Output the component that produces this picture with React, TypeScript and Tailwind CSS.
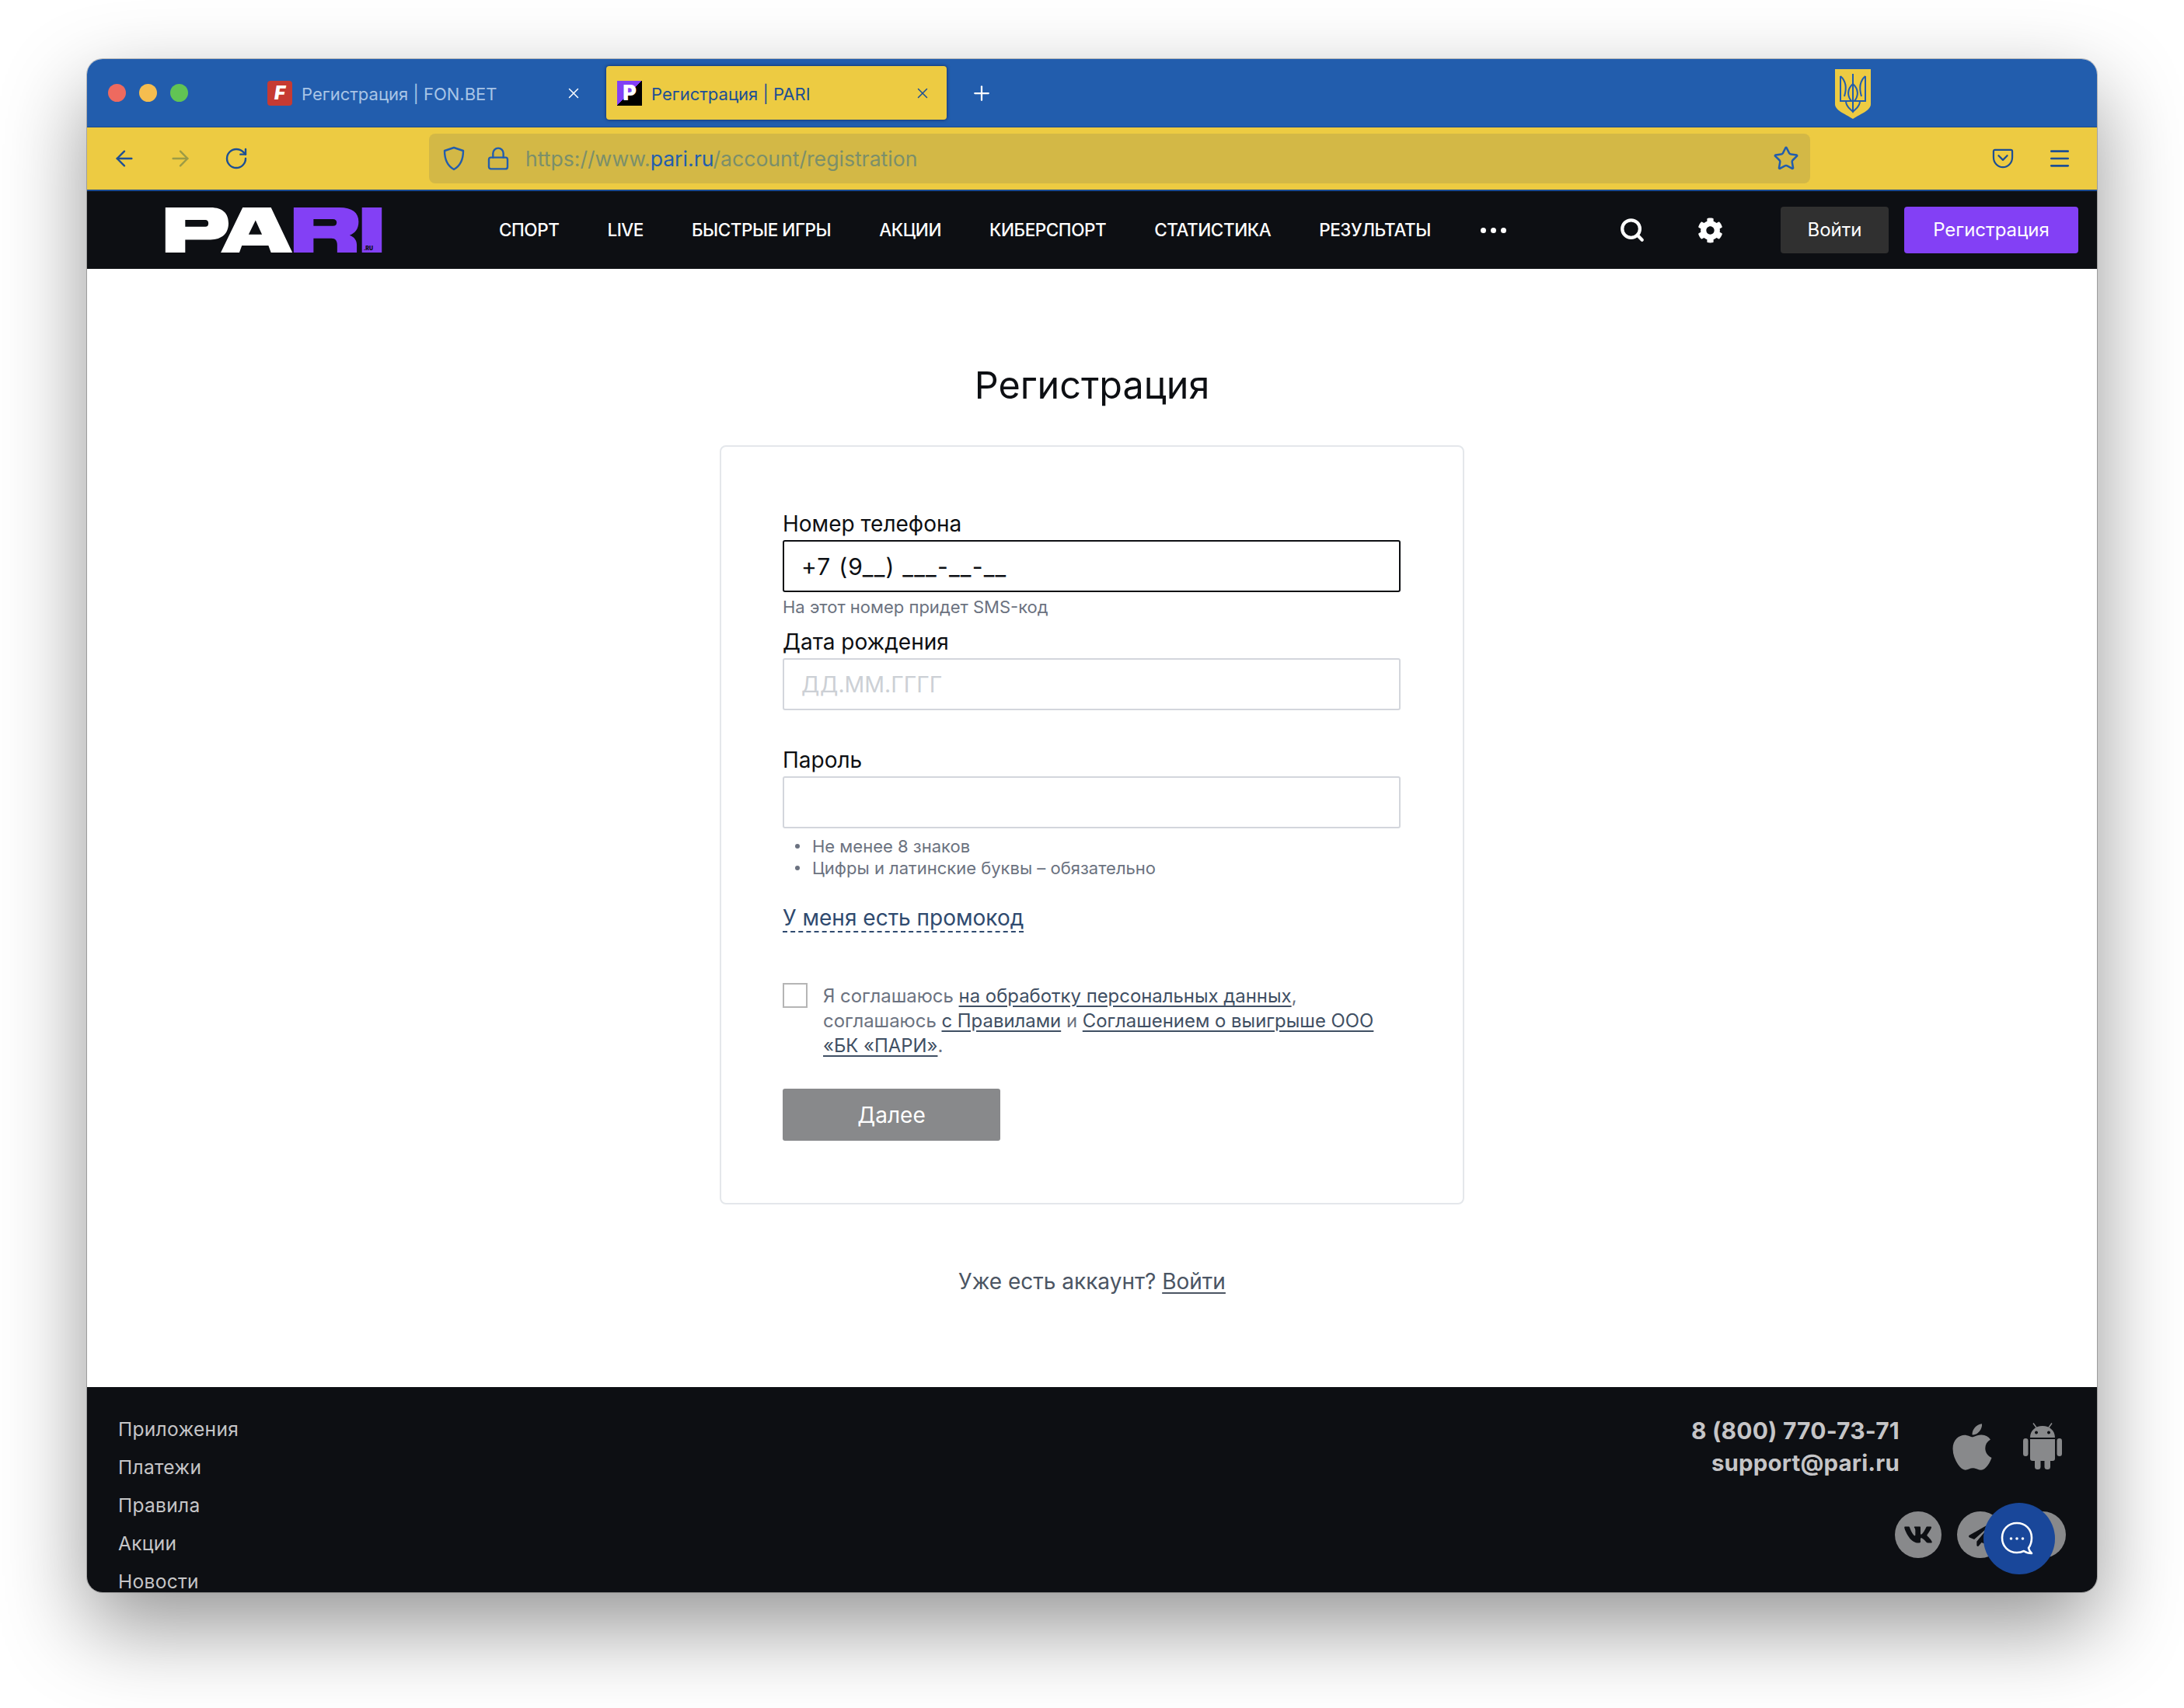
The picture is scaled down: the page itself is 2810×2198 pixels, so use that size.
import { ArrowLeft, ArrowRight, Lock, Menu, Plus, RotateCw, Search, Star, X } from "lucide-react";
import { FaApple, FaCog, FaInstagram, FaPaperPlane, FaVk } from "react-icons/fa";

const navItems = ["СПОРТ", "LIVE", "БЫСТРЫЕ ИГРЫ", "АКЦИИ", "КИБЕРСПОРТ", "СТАТИСТИКА", "РЕЗУЛЬТАТЫ"];
const footerLinks = ["Приложения", "Платежи", "Правила", "Акции", "Новости"];

function PariLogo() {
  return (
    <svg viewBox="95 80 840 175" className="w-[280px] h-[58px] shrink-0" role="img" aria-label="PARI.RU">
      <path fill="#fff" fillRule="evenodd" d="M95 80H270C320 80 340 105 340 142C340 180 315 205 270 205H172V255H95ZM172 128V155H250C258 155 262 150 262 141C262 133 258 128 250 128Z" />
      <path fill="#fff" fillRule="evenodd" d="M395 80H505L588 255H505L495 228H392L382 255H310ZM445 130L470 185H418Z" />
      <path fill="#8340f5" fillRule="evenodd" d="M593 80H770C820 80 845 100 845 135C845 165 830 180 810 188C830 195 838 210 838 225V255H762V225C762 210 755 200 740 200H670V255H593ZM670 125V152H745C755 152 760 147 760 138C760 130 755 125 745 125Z" />
      <rect x="858" y="80" width="77" height="175" fill="#8340f5" />
      <text x="864" y="245" fontFamily="Inter, sans-serif" fontWeight="900" fontSize="21" fill="#0d0f13">.RU</text>
    </svg>
  );
}

function Trident() {
  return (
    <svg viewBox="0 0 46 65" className="w-[46px] h-[65px]">
      <path fill="#edcb42" d="M0 1H46V46C46 54 34 58 23 65C12 58 0 54 0 46Z" />
      <g fill="none" stroke="#225dad" strokeWidth="2">
        <path d="M23 7V56" />
        <path d="M7 10V42H39V10" />
        <path d="M7 10C14 16 15 26 12 36M39 10C32 16 31 26 34 36" />
        <path d="M23 20C15 27 16 36 21 42M23 20C31 27 30 36 25 42" />
        <path d="M14 42C14 50 20 52 23 56C26 52 32 50 32 42" />
      </g>
    </svg>
  );
}

function ShieldIcon() {
  return (
    <svg viewBox="0 0 30 32" className="w-[30px] h-[32px]" fill="none" stroke="#225dad" strokeWidth="2.4">
      <path d="M15 2L27 6C27 17 24 25 15 30C6 25 3 17 3 6Z" strokeLinejoin="round" />
    </svg>
  );
}

function PocketIcon() {
  return (
    <svg viewBox="0 0 30 28" className="w-[28px] h-[26px]" fill="none" stroke="#1d4f94" strokeWidth="2.4" strokeLinecap="round" strokeLinejoin="round">
      <path d="M4 2H26C27.5 2 28 3 28 4V12C28 20 22 26 15 26C8 26 2 20 2 12V4C2 3 2.500 2 4 2Z" />
      <path d="M9 10L15 16L21 10" />
    </svg>
  );
}

function AndroidIcon() {
  return (
    <svg viewBox="0 0 50 60" className="w-[50px] h-[60px] shrink-0" fill="#88898b">
      <path d="M13 0.500L17 6M37 0.500L33 6" stroke="#88898b" strokeWidth="1.500" fill="none" />
      <path fillRule="evenodd" d="M9 19C9 10 16 4 25 4C34 4 41 10 41 19ZM17 10.500a2 2 0 1 0 0.010 0ZM33 10.500a2 2 0 1 0 0.010 0Z" />
      <path d="M9 21H41V46C41 48 40 49 38 49H12C10 49 9 48 9 46Z" />
      <rect x="0" y="20" width="6.500" height="23" rx="3.250" />
      <rect x="43.500" y="20" width="6.500" height="23" rx="3.250" />
      <rect x="15" y="46" width="7.500" height="14" rx="3.500" />
      <rect x="27.500" y="46" width="7.500" height="14" rx="3.500" />
    </svg>
  );
}

function ChatIcon() {
  return (
    <svg viewBox="0 0 44 44" className="w-[44px] h-[44px] mr-[7px]" fill="none" stroke="#fff" strokeWidth="2.6">
      <path d="M22 2C11 2 3 10 3 21C3 32 11 40 22 40C26 40 29 39 31 38C34 40 37 41 41 41C39 39 37.500 37 37 34C40 30 41 26 41 21C41 10 33 2 22 2Z" strokeLinejoin="round" />
      <circle cx="14.500" cy="22" r="1.800" fill="#fff" stroke="none" />
      <circle cx="22" cy="22" r="1.800" fill="#fff" stroke="none" />
      <circle cx="29.500" cy="22" r="1.800" fill="#fff" stroke="none" />
    </svg>
  );
}

function TabStrip() {
  return (
    <div className="h-[88px] bg-[#225dad] flex items-center shrink-0 border-b border-[#1b4a8c]">
      <div className="flex gap-[17px] pl-[27px] w-[218px] shrink-0">
        <span className="w-[23px] h-[23px] rounded-full bg-[#ee6a5f]" />
        <span className="w-[23px] h-[23px] rounded-full bg-[#f5bd4f]" />
        <span className="w-[23px] h-[23px] rounded-full bg-[#61c454]" />
      </div>
      <div className="w-[440px] h-[69px] flex items-center pl-[14px] pr-[21px] shrink-0">
        <span className="w-[32px] h-[32px] rounded-[4px] bg-[#c63a32] text-white text-[24px] leading-[32px] font-black italic text-center font-['Inter']">F</span>
        <span className="ml-[12px] mt-[3px] text-[22px] text-[#a9c5e6] font-['Inter']">Регистрация | FON.BET</span>
        <X className="ml-auto text-white" size={22} strokeWidth={1.6} />
      </div>
      <div className="ml-[10px] w-[438px] h-[69px] flex items-center pl-[14px] pr-[20px] shrink-0 rounded-[4px] bg-[#edcb42] shadow-[0_0_4px_rgba(0,0,40,0.6)]">
        <span className="relative w-[32px] h-[32px] bg-[linear-gradient(135deg,#8340f5_50%,#000_50%)] text-white text-[27px] leading-[32px] font-black text-center font-['Inter']">P</span>
        <span className="ml-[12px] mt-[3px] text-[22px] text-[#1d4f94] font-['Inter']">Регистрация | PARI</span>
        <X className="ml-auto text-[#1d4f94]" size={22} strokeWidth={1.6} />
      </div>
      <Plus className="ml-[30px] text-white shrink-0" size={30} strokeWidth={1.8} />
      <div className="ml-[1083px] mt-[1px]">
        <Trident />
      </div>
    </div>
  );
}

function Toolbar() {
  return (
    <div className="h-[82px] bg-[#edcb42] flex items-center shrink-0 border-b-2 border-[#1b4a8c]">
      <div className="w-[440px] flex items-center pl-[32px] gap-[40px] shrink-0">
        <ArrowLeft className="text-[#1d4f94]" size={32} strokeWidth={1.8} />
        <ArrowRight className="text-[#9c9b45]" size={32} strokeWidth={1.8} />
        <RotateCw className="text-[#1d4f94]" size={32} strokeWidth={1.8} />
      </div>
      <div className="w-[1777px] h-[64px] rounded-[8px] bg-[#d3b846] flex items-center pl-[17px] pr-[14px] shrink-0">
        <ShieldIcon />
        <Lock className="ml-[26px] text-[#225dad]" size={32} strokeWidth={1.8} />
        <span className="ml-[19px] mt-[1px] text-[26.6px] font-['Inter'] text-[#7b8f6a]">
          https://www.<span className="text-[#225dad]">pari.ru</span>/account/registration
        </span>
        <Star className="ml-auto text-[#225dad]" size={34} strokeWidth={1.8} />
      </div>
      <div className="ml-[234px] shrink-0 flex items-center">
        <PocketIcon />
      </div>
      <Menu className="ml-[43px] text-[#1d4f94] shrink-0" size={32} strokeWidth={2} />
    </div>
  );
}

function SiteNav() {
  return (
    <div className="h-[100px] bg-[#0d0f13] flex items-center pl-[100px] pr-[24px] shrink-0">
      <PariLogo />
      <nav className="ml-[150px] flex items-center gap-[62px] text-white text-[22.5px] font-medium tracking-[-0.45px] font-['Inter']">
        {navItems.map((item) => (
          <span key={item}>{item}</span>
        ))}
        <span className="flex gap-[6px] ml-[2px]">
          <span className="w-[7px] h-[7px] rounded-full bg-white" />
          <span className="w-[7px] h-[7px] rounded-full bg-white" />
          <span className="w-[7px] h-[7px] rounded-full bg-white" />
        </span>
      </nav>
      <div className="ml-auto flex items-center">
        <Search className="text-white" size={34} strokeWidth={3} />
        <FaCog className="ml-[67px] text-white" size={33} />
        <button className="ml-[74px] w-[139px] h-[60px] rounded-[4px] bg-[#303030] text-white text-[24px] font-['Inter']">Войти</button>
        <button className="ml-[20px] w-[224px] h-[60px] rounded-[4px] bg-[#8340f5] text-white text-[24px] font-['Inter']">Регистрация</button>
      </div>
    </div>
  );
}

function Field({ label, value, placeholder, focused, children }: { label: string; value?: string; placeholder?: string; focused?: boolean; children?: React.ReactNode }) {
  return (
    <div className="h-[152px]">
      <label className="block h-[34px] leading-[34px] text-[28px] text-[#0d0f13] mb-[4px]">{label}</label>
      <input
        readOnly
        value={value ?? ""}
        placeholder={placeholder}
        className={`block w-[795px] h-[67px] rounded-[3px] px-[22px] text-[#0d0f13] placeholder:text-[#ccd0d5] outline-none border-2 ${focused ? "border-[#0d0f13] text-[30px] tracking-[1.2px]" : "border-[#d3d6dc] text-[28.5px]"}`}
      />
      {children}
    </div>
  );
}

function RegistrationForm() {
  return (
    <main className="h-[1439px] bg-white flex flex-col items-center shrink-0 font-['Inter']">
      <h1 className="mt-[122px] h-[56px] leading-[56px] text-[48.5px] font-normal text-[#0d0f13]">Регистрация</h1>
      <div className="mt-[49px] w-[958px] h-[977px] border-2 border-[#e4e7eb] rounded-[8px] pt-[82px] pl-[79px]">
        <Field label="Номер телефона" value="+7 (9__) ___-__-__" focused>
          <p className="mt-[5px] text-[22px] leading-[28px] text-[#6b7280]">На этот номер придет SMS-код</p>
        </Field>
        <Field label="Дата рождения" placeholder="ДД.ММ.ГГГГ" />
        <Field label="Пароль" />
        <ul className="-mt-[38px] pl-[16px] text-[22px] leading-[28px] text-[#6b7280]">
          <li className="flex items-center">
            <span className="w-[6px] h-[6px] rounded-full bg-[#6b7280] mr-[16px]" />Не менее 8 знаков
          </li>
          <li className="flex items-center">
            <span className="w-[6px] h-[6px] rounded-full bg-[#6b7280] mr-[16px]" />Цифры и латинские буквы – обязательно
          </li>
        </ul>
        <div className="mt-[34px] h-[34px]">
          <span className="inline-block text-[28px] leading-[33px] text-[#2f4a6f] border-b-2 border-dashed border-[#2f4a6f]">У меня есть промокод</span>
        </div>
        <div className="mt-[67px] flex">
          <span className="mt-[-1px] w-[32px] h-[32px] border-2 border-[#b5b5b5] shrink-0" />
          <p className="ml-[20px] w-[720px] text-[23.9px] leading-[32px] text-[#6b7280]">
            Я соглашаюсь <a className="underline text-[#3f4f63] underline-offset-4">на обработку персональных данных</a>, соглашаюсь{" "}
            <a className="underline text-[#3f4f63] underline-offset-4">с Правилами</a> и{" "}
            <a className="underline text-[#3f4f63] underline-offset-4">Соглашением о выигрыше ООО «БК «ПАРИ»</a>.
          </p>
        </div>
        <button className="mt-[39px] block w-[280px] h-[67px] rounded-[3px] bg-[#88898b] text-white text-[28px]">Далее</button>
      </div>
      <p className="mt-[82px] text-[28px] leading-[34px] text-[#4b5563]">
        Уже есть аккаунт? <a className="underline underline-offset-4">Войти</a>
      </p>
    </main>
  );
}

function Footer() {
  return (
    <footer className="flex-1 bg-[#0d0f13] flex justify-between pl-[40px] pr-[40px] font-['Inter'] overflow-hidden">
      <ul className="pt-[39px] text-[24.5px] leading-[30px] tracking-[0.3px] text-[#c5c5c7]">
        {footerLinks.map((link) => (
          <li key={link} className="h-[49px]">{link}</li>
        ))}
      </ul>
      <div className="pt-[36px] flex flex-col items-end">
        <div className="flex pr-[5px]">
          <div className="text-right text-[30px] leading-[41px] font-bold tracking-[0.2px] text-[#c5c5c7]">
            <p>8 (800) 770-73-71</p>
            <p className="text-[29.400px]">support@pari.ru</p>
          </div>
          <FaApple className="ml-[68px] mt-[7px] w-[51px] h-[68px] text-[#88898b]" />
          <div className="ml-[40px] mt-[10px]">
            <AndroidIcon />
          </div>
        </div>
        <div className="mt-[42px] flex gap-[20px]">
          <span className="w-[60px] h-[60px] rounded-full bg-[#88898b] flex items-center justify-center text-[#0d0f13]"><FaVk size={38} /></span>
          <span className="w-[60px] h-[60px] rounded-full bg-[#88898b] flex items-center justify-center text-[#0d0f13]"><FaPaperPlane size={30} /></span>
          <span className="w-[60px] h-[60px] rounded-full bg-[#88898b] flex items-center justify-center text-[#0d0f13]"><FaInstagram size={30} /></span>
        </div>
      </div>
    </footer>
  );
}

export default function App() {
  return (
    <div className="w-[2810px] h-[2198px] bg-white overflow-hidden pt-[76px] pl-[112px]">
      <div className="relative w-[2586px] h-[1973px] rounded-[20px] flex flex-col overflow-hidden shadow-[0_44px_110px_0_rgba(0,0,0,0.42),0_0_0_1px_rgba(0,0,0,0.22)]">
        <TabStrip />
        <Toolbar />
        <SiteNav />
        <RegistrationForm />
        <Footer />
        <button className="absolute right-[54px] bottom-[23px] w-[92px] h-[92px] rounded-full bg-[#19479a] flex items-center justify-center">
          <ChatIcon />
        </button>
      </div>
    </div>
  );
}
